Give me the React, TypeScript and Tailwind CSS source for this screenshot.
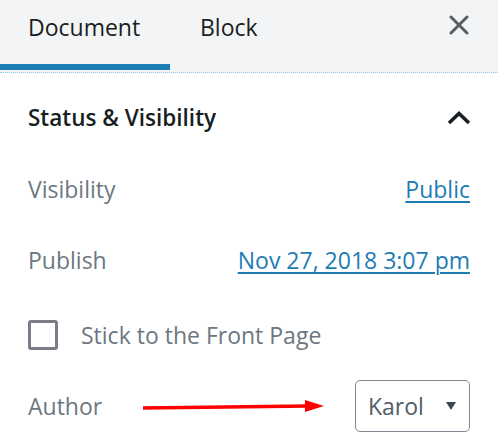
import React from "react";

export default function App() {
  const font = { fontFamily: '"Open Sans", "Noto Sans", sans-serif' };
  return (
    <div className="w-[498px] h-[445px] bg-white overflow-hidden" style={font}>
      {/* Header */}
      <div className="h-[73px] bg-[#f3f4f5] border-b border-dotted border-[#8ccbf0] flex items-start">
        <div className="w-[170px] h-[70px] border-b-[6px] border-[#1a7db6] pl-[28px] pt-[11px] text-[23px] leading-[32px] text-[#191e23]">
          Document
        </div>
        <div className="pl-[30px] pt-[11px] text-[23px] leading-[32px] text-[#191e23]">
          Block
        </div>
        <div className="ml-auto mr-[28px] mt-[14px]">
          <svg width="22" height="22" viewBox="0 0 22 22">
            <path d="M3 3 L19 19 M19 3 L3 19" stroke="#555d66" strokeWidth="3" strokeLinecap="round" />
          </svg>
        </div>
      </div>

      {/* Panel */}
      <div className="px-[28px] pt-[30px]">
        <div className="h-[30px] flex items-center justify-between">
          <span className="text-[22.5px] leading-[30px] font-semibold text-[#191e23]">Status &amp; Visibility</span>
          <svg width="24" height="14" viewBox="0 0 24 14" className="mr-[-1px]">
            <path d="M2 12 L12 2.5 L22 12" stroke="#191e23" strokeWidth="3.5" fill="none" />
          </svg>
        </div>

        <div className="mt-[41px] h-[30px] flex items-center justify-between text-[23px] leading-[30px]">
          <span className="text-[#6c7781]">Visibility</span>
          <span className="text-[#1e7cb4] underline underline-offset-[3px] decoration-[2px]">Public</span>
        </div>

        <div className="mt-[41px] h-[30px] flex items-center justify-between text-[23px] leading-[30px]">
          <span className="text-[#6c7781]">Publish</span>
          <span className="text-[#1e7cb4] underline underline-offset-[3px] decoration-[2px]">Nov 27, 2018 3:07 pm</span>
        </div>

        <div className="mt-[45px] h-[30px] flex items-center text-[23px] leading-[30px]">
          <div className="w-[30px] h-[30px] border-[3px] border-[#7c7b87] rounded-[3px]" />
          <span className="ml-[23px] text-[#6c7781]">Stick to the Front Page</span>
        </div>

        <div className="relative mt-[30px] h-[52px] flex items-center justify-between text-[23px] leading-[30px]">
          <span className="text-[#6c7781]">Author</span>
          <svg
            className="absolute left-[115px] top-[18px]"
            width="182"
            height="16"
            viewBox="0 0 182 16"
          >
            <path d="M0 10 L166 8" stroke="#ff0000" strokeWidth="3.5" />
            <polygon points="162,2 181,8 162,14" fill="#ff0000" />
          </svg>
          <div className="w-[115px] h-[52px] border border-[#7e8993] rounded-[5px] flex items-center pl-[12px] pr-[13px]">
            <span className="text-[#555d66]">Karol</span>
            <svg className="ml-auto" width="10" height="9" viewBox="0 0 10 9">
              <polygon points="0,0 10,0 5,8" fill="#40464d" />
            </svg>
          </div>
        </div>
      </div>
    </div>
  );
}
